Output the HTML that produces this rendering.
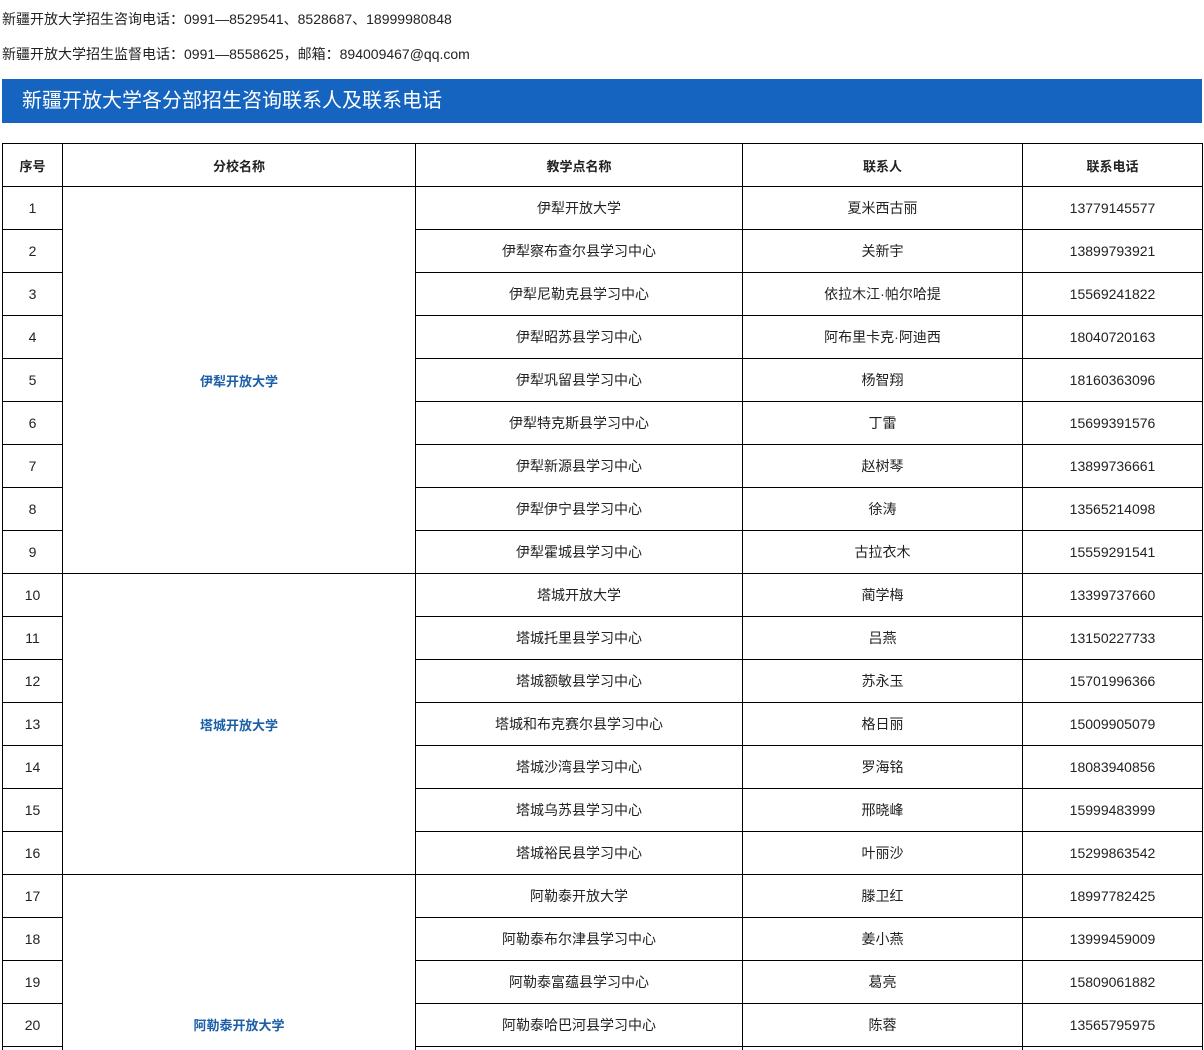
<!DOCTYPE html>
<html><head><meta charset="utf-8">
<style>
html,body{margin:0;padding:0;background:#fff;height:1050px;overflow:hidden;}
#w{width:1204px;height:1050px;overflow:hidden;position:relative;font-family:"Liberation Sans","Noto Sans CJK SC",sans-serif;color:#222;}
.l1{position:absolute;left:2px;top:10px;font-size:14px;line-height:18px;}
.l2{position:absolute;left:2px;top:45px;font-size:14px;line-height:18px;}
.bar{position:absolute;left:2px;top:79px;width:1200px;height:44px;background:#1565c0;color:#fff;font-size:20px;line-height:44px;box-sizing:border-box;padding-left:20px;}
table{position:absolute;left:2px;top:143px;border-collapse:collapse;width:1200px;table-layout:fixed;font-size:14px;}
td,th{border:1px solid #000;height:42px;padding:0;text-align:center;vertical-align:middle;box-sizing:border-box;}
th{font-weight:bold;color:#222;font-size:13px;}
td.b{color:#1a5fa8;font-weight:bold;font-size:13px;}
.vl{position:absolute;top:1046px;width:1px;height:4px;background:#000;}
</style></head><body><div id="w">
<div class="l1">新疆开放大学招生咨询电话：0991—8529541、8528687、18999980848</div>
<div class="l2">新疆开放大学招生监督电话：0991—8558625，邮箱：894009467@qq.com</div>
<div class="bar">新疆开放大学各分部招生咨询联系人及联系电话</div>
<table>
<colgroup><col style="width:60px"><col style="width:353px"><col style="width:327px"><col style="width:280px"><col style="width:180px"></colgroup>
<tr style="height:43px"><th>序号</th><th>分校名称</th><th>教学点名称</th><th>联系人</th><th>联系电话</th></tr>
<tr style="height:43px"><td>1</td><td class="b" rowspan="9">伊犁开放大学</td><td>伊犁开放大学</td><td>夏米西古丽</td><td>13779145577</td></tr>
<tr style="height:43px"><td>2</td><td>伊犁察布查尔县学习中心</td><td>关新宇</td><td>13899793921</td></tr>
<tr style="height:43px"><td>3</td><td>伊犁尼勒克县学习中心</td><td>依拉木江·帕尔哈提</td><td>15569241822</td></tr>
<tr style="height:43px"><td>4</td><td>伊犁昭苏县学习中心</td><td>阿布里卡克·阿迪西</td><td>18040720163</td></tr>
<tr style="height:43px"><td>5</td><td>伊犁巩留县学习中心</td><td>杨智翔</td><td>18160363096</td></tr>
<tr style="height:43px"><td>6</td><td>伊犁特克斯县学习中心</td><td>丁雷</td><td>15699391576</td></tr>
<tr style="height:43px"><td>7</td><td>伊犁新源县学习中心</td><td>赵树琴</td><td>13899736661</td></tr>
<tr style="height:43px"><td>8</td><td>伊犁伊宁县学习中心</td><td>徐涛</td><td>13565214098</td></tr>
<tr style="height:43px"><td>9</td><td>伊犁霍城县学习中心</td><td>古拉衣木</td><td>15559291541</td></tr>
<tr style="height:43px"><td>10</td><td class="b" rowspan="7">塔城开放大学</td><td>塔城开放大学</td><td>蔺学梅</td><td>13399737660</td></tr>
<tr style="height:43px"><td>11</td><td>塔城托里县学习中心</td><td>吕燕</td><td>13150227733</td></tr>
<tr style="height:43px"><td>12</td><td>塔城额敏县学习中心</td><td>苏永玉</td><td>15701996366</td></tr>
<tr style="height:43px"><td>13</td><td>塔城和布克赛尔县学习中心</td><td>格日丽</td><td>15009905079</td></tr>
<tr style="height:43px"><td>14</td><td>塔城沙湾县学习中心</td><td>罗海铭</td><td>18083940856</td></tr>
<tr style="height:43px"><td>15</td><td>塔城乌苏县学习中心</td><td>邢晓峰</td><td>15999483999</td></tr>
<tr style="height:43px"><td>16</td><td>塔城裕民县学习中心</td><td>叶丽沙</td><td>15299863542</td></tr>
<tr style="height:43px"><td>17</td><td class="b" rowspan="4" style="padding-top:128px;border-bottom:none">阿勒泰开放大学</td><td>阿勒泰开放大学</td><td>滕卫红</td><td>18997782425</td></tr>
<tr style="height:43px"><td>18</td><td>阿勒泰布尔津县学习中心</td><td>姜小燕</td><td>13999459009</td></tr>
<tr style="height:43px"><td>19</td><td>阿勒泰富蕴县学习中心</td><td>葛亮</td><td>15809061882</td></tr>
<tr style="height:43px"><td>20</td><td>阿勒泰哈巴河县学习中心</td><td>陈蓉</td><td>13565795975</td></tr>
</table>
<div class="vl" style="left:2px"></div>
<div class="vl" style="left:62px"></div>
<div class="vl" style="left:415px"></div>
<div class="vl" style="left:742px"></div>
<div class="vl" style="left:1022px"></div>
<div class="vl" style="left:1202px"></div>
</div></body></html>
